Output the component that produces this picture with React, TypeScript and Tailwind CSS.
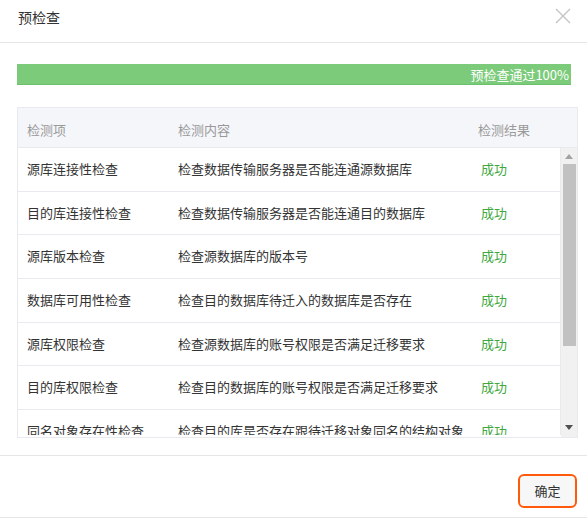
const rows = [
  ["源库连接性检查", "检查数据传输服务器是否能连通源数据库"],
  ["目的库连接性检查", "检查数据传输服务器是否能连通目的数据库"],
  ["源库版本检查", "检查源数据库的版本号"],
  ["数据库可用性检查", "检查目的数据库待迁入的数据库是否存在"],
  ["源库权限检查", "检查源数据库的账号权限是否满足迁移要求"],
  ["目的库权限检查", "检查目的数据库的账号权限是否满足迁移要求"],
  ["同名对象存在性检查", "检查目的库是否存在跟待迁移对象同名的结构对象"],
];

const App = () => {
  return (
    <div
      className="w-[587px] h-[518px] bg-white text-[#333] overflow-hidden flex flex-col"
      style={{ fontFamily: '"Noto Sans CJK SC", "Noto Sans", sans-serif' }}
    >
      <div className="h-[43px] shrink-0 border-b border-[#e6e6e6] flex items-start justify-between pl-[18px] pr-[16px] pt-[6px]">
        <span className="text-[14px] leading-[22px] text-[#333]">预检查</span>
        <svg width="16" height="16" viewBox="0 0 16 16" className="mt-[2px]">
          <path d="M1 1L15 15M15 1L1 15" stroke="#c4c4c4" strokeWidth="1.4" />
        </svg>
      </div>

      <div className="mt-[21px] ml-[17px] w-[554px] h-[21px] bg-[#7bcb7b] border-b border-[#6cbf6c] flex items-center justify-end pr-[2px] shrink-0">
        <span className="text-[13px] leading-none text-white">预检查通过100%</span>
      </div>

      <div className="mt-[22px] ml-[17px] w-[561px] border border-[#e8eaf0] shrink-0">
        <div className="h-[40px] bg-[#f5f6fa] border-b border-[#e8eaf0] grid grid-cols-[151px_300px_1fr] items-center pl-[9px] pt-[4px] text-[13px] text-[#999]">
          <span>检测项</span>
          <span>检测内容</span>
          <span>检测结果</span>
        </div>
        <div className="h-[289px] flex overflow-hidden">
          <div className="w-[543px] h-[287px] overflow-hidden border-r border-[#e8eaf0]">
            {rows.map(([name, desc]) => (
              <div
                key={name}
                className="h-[43.67px] border-b border-[#e8eaf0] grid grid-cols-[151px_300px_1fr] items-center pl-[9px] pb-[1px] text-[13px] text-[#333]"
              >
                <span className="whitespace-nowrap">{name}</span>
                <span className="whitespace-nowrap">{desc}</span>
                <span className="pl-[3px] text-[#3ea83e]">成功</span>
              </div>
            ))}
          </div>
          <div className="w-[16px] bg-[#f1f1f1] flex flex-col items-center">
            <div className="h-[16px] flex items-center justify-center">
              <svg width="8" height="5" viewBox="0 0 8 5">
                <path d="M4 0L8 5H0Z" fill="#a3a3a3" />
              </svg>
            </div>
            <div className="w-[13px] h-[182px] bg-[#c1c1c1]"></div>
            <div className="flex-1"></div>
            <div className="h-[16px] flex items-center justify-center mb-[2px]">
              <svg width="8" height="5" viewBox="0 0 8 5">
                <path d="M0 0H8L4 5Z" fill="#505050" />
              </svg>
            </div>
          </div>
        </div>
      </div>

      <div className="mt-[17px] border-t border-[#e6e6e6] flex-1 flex items-start justify-end pr-[10px] pt-[18px] border-b">
        <button className="w-[59px] h-[34px] rounded-[6px] border-2 border-[#ff5a0a] bg-[#f7f7f7] text-[13px] text-[#333]">
          确定
        </button>
      </div>
    </div>
  );
};

export default App;
